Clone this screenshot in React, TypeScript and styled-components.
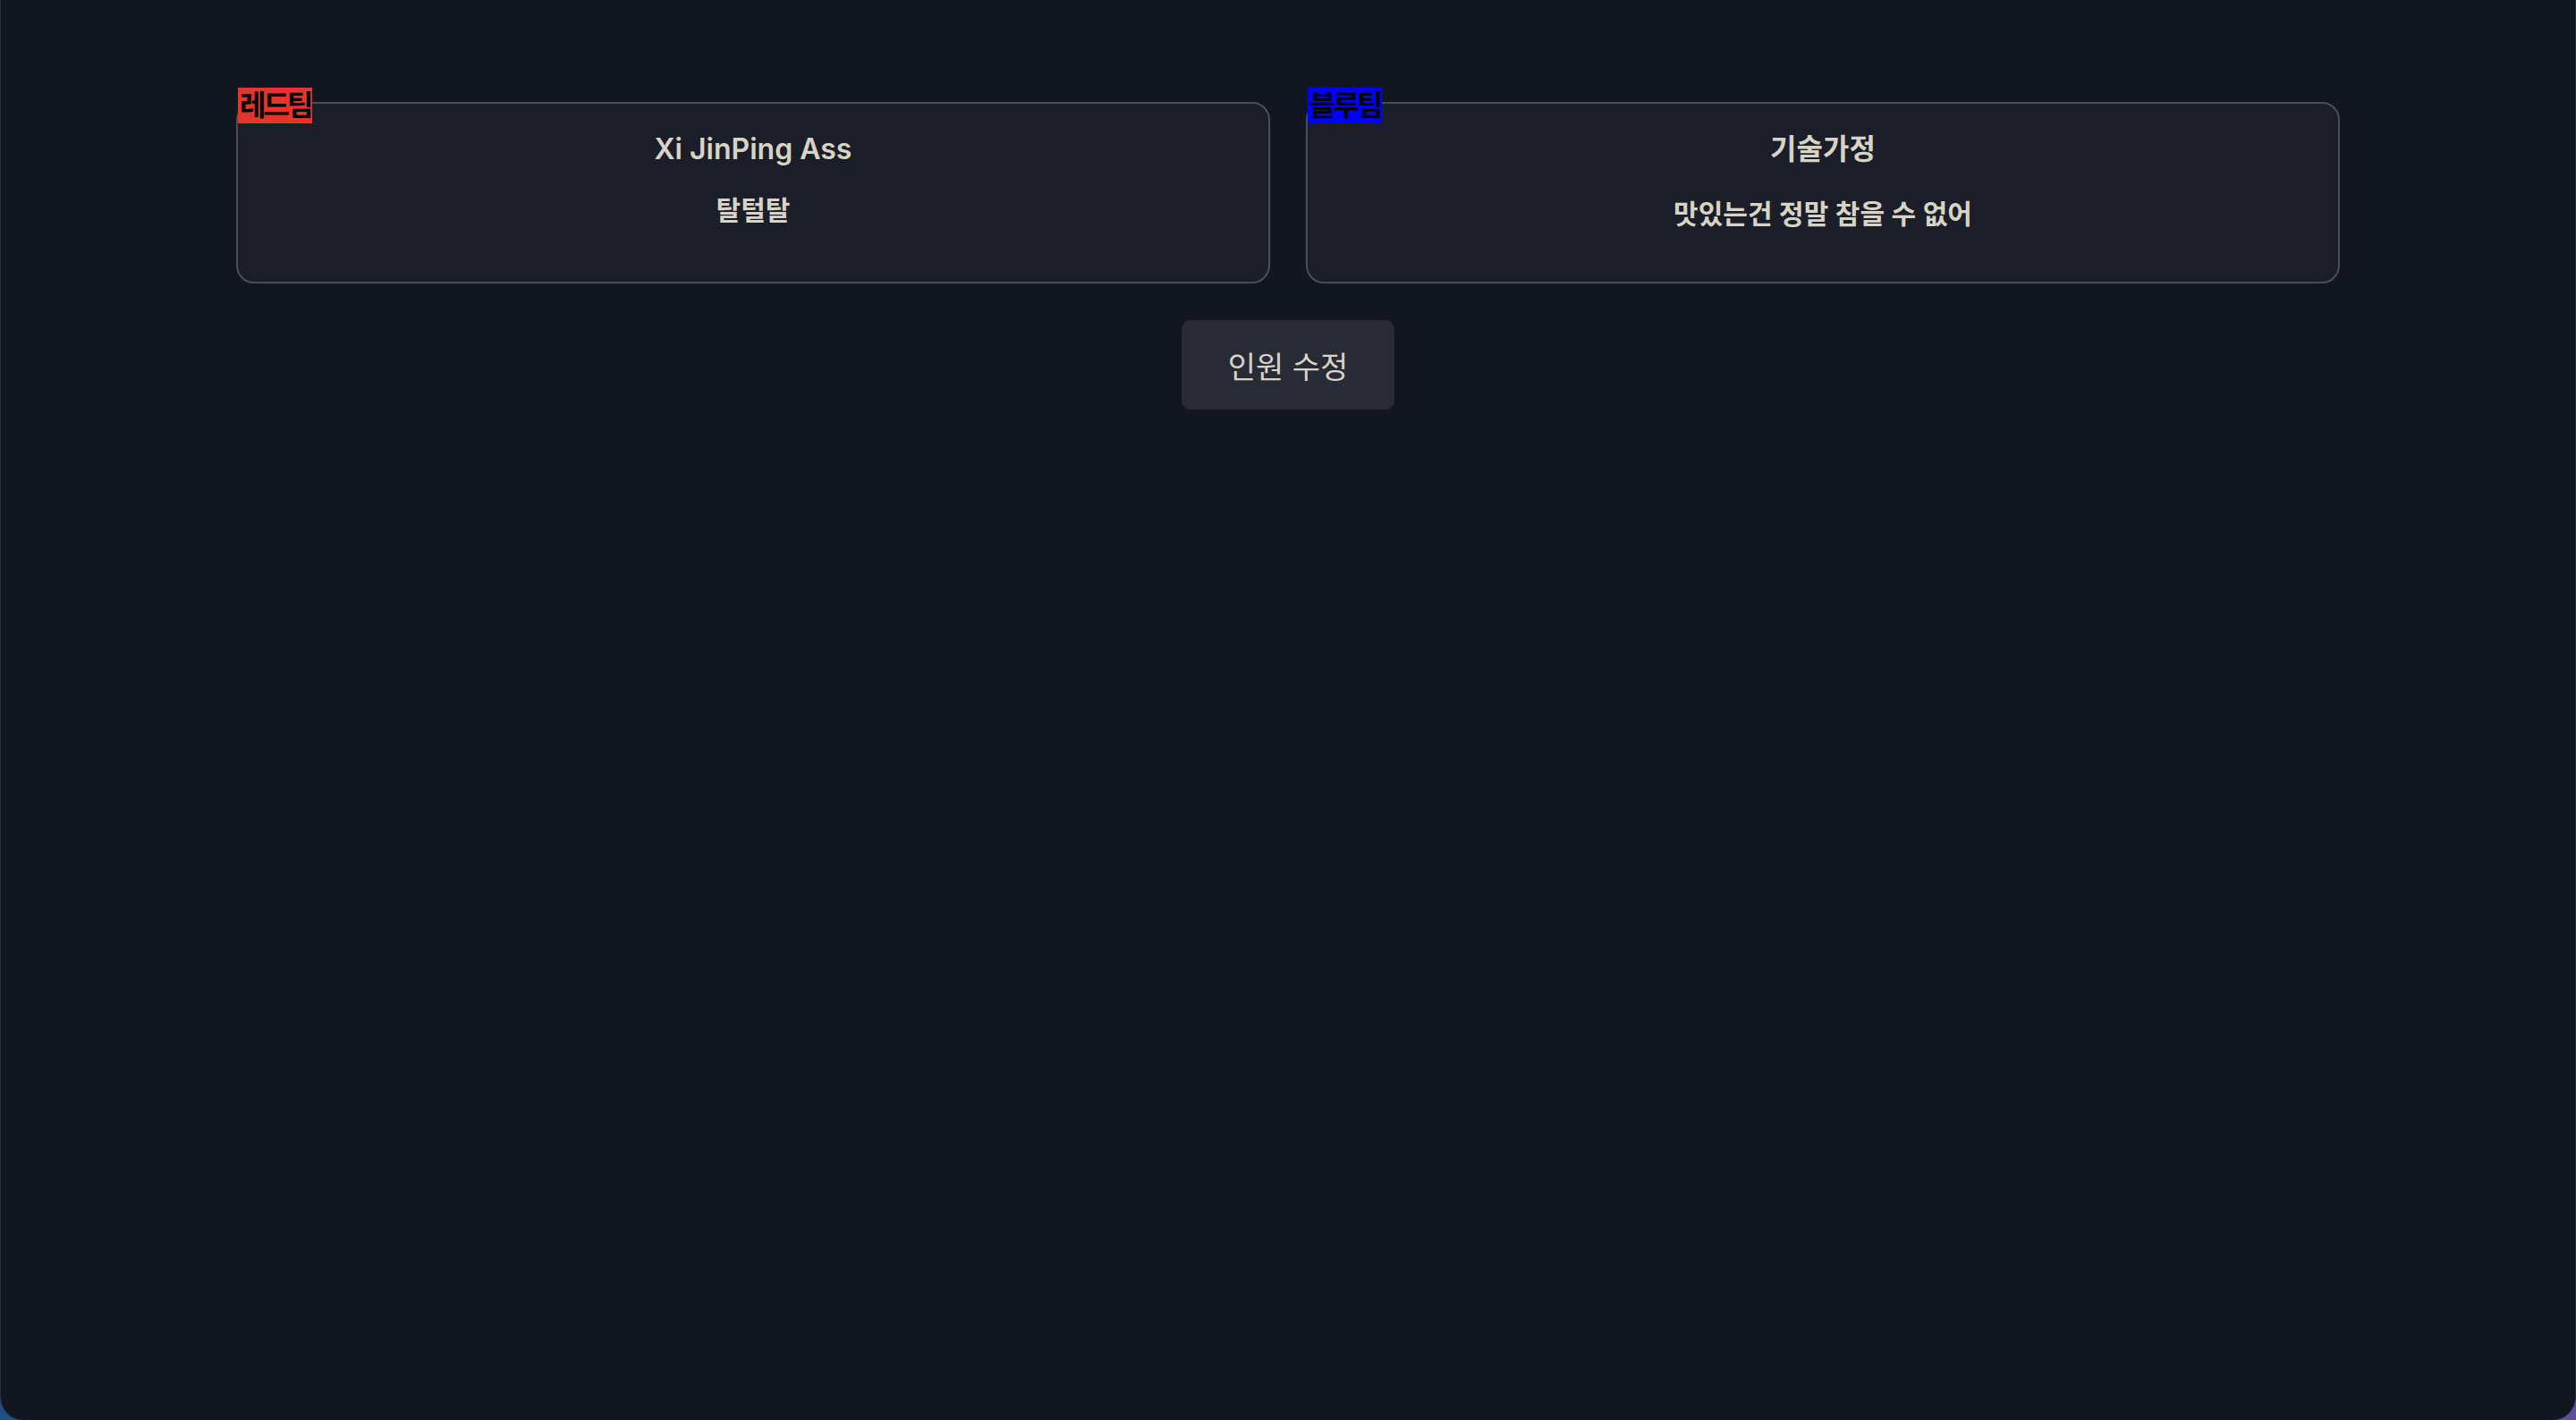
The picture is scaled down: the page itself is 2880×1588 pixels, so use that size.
import React from "react";
import styled, { createGlobalStyle } from "styled-components";

const GlobalStyle = createGlobalStyle`
  html, body {
    margin: 0;
    padding: 0;
    height: 100%;
  }
  body {
    background: linear-gradient(90deg, #1f4f86 0%, #3b4c8c 50%, #5e4f9c 100%);
    font-family: Inter, "Noto Sans CJK KR", sans-serif;
  }
  #root {
    height: 100%;
  }
`;

const Frame = styled.main`
  box-sizing: border-box;
  height: 100vh;
  background: #121620;
  border-left: 1px solid #243049;
  border-right: 1px solid #243049;
  border-radius: 0 0 26px 26px;
  padding-top: 114px;
  display: flex;
  flex-direction: column;
  align-items: center;
  gap: 41px;
`;

const TeamGrid = styled.section`
  width: 100%;
  max-width: 2352px;
  display: grid;
  grid-template-columns: 1fr 1fr;
  gap: 40px;
`;

const TeamCard = styled.article`
  position: relative;
  box-sizing: border-box;
  height: 203px;
  padding: 28px 24px 0;
  background: #1b1e29;
  border: 2px solid #4a4d59;
  border-radius: 20px;
  display: flex;
  flex-direction: column;
  align-items: center;
  color: #d7d4c6;
`;

const TeamBadge = styled.span<{ $color: string }>`
  position: absolute;
  top: -18px;
  left: 0;
  height: 40px;
  padding: 0 2px;
  line-height: 40px;
  font-size: 32px;
  font-weight: 700;
  letter-spacing: -3px;
  color: #000;
  background: ${(p) => p.$color};
`;

const TeamTitle = styled.h2`
  margin: 0;
  font-size: 32px;
  line-height: 46px;
  font-weight: 600;
`;

const TeamMotto = styled.p<{ $offset: number }>`
  margin: ${(p) => p.$offset}px 0 0;
  font-size: 30px;
  line-height: 46px;
  font-weight: 600;
  letter-spacing: 0;
`;

const EditButton = styled.button`
  height: 100px;
  padding: 0 52px;
  border: none;
  border-radius: 10px;
  background: #282a36;
  color: #d7d4c6;
  font-family: Inter, "Noto Sans CJK KR", sans-serif;
  font-size: 34px;
  font-weight: 400;
  letter-spacing: 0;
  cursor: pointer;
`;

const teams = [
  { badge: "레드팀", color: "#e5352a", title: "Xi JinPing Ass", motto: "탈털탈", offset: 22 },
  { badge: "블루팀", color: "#0000ff", title: "기술가정", motto: "맛있는건 정말 참을 수 없어", offset: 26 },
];

export default function App() {
  return (
    <>
      <GlobalStyle />
      <Frame>
        <TeamGrid>
          {teams.map((t) => (
            <TeamCard key={t.badge}>
              <TeamBadge $color={t.color}>{t.badge}</TeamBadge>
              <TeamTitle>{t.title}</TeamTitle>
              <TeamMotto $offset={t.offset}>{t.motto}</TeamMotto>
            </TeamCard>
          ))}
        </TeamGrid>
        <EditButton>인원 수정</EditButton>
      </Frame>
    </>
  );
}
